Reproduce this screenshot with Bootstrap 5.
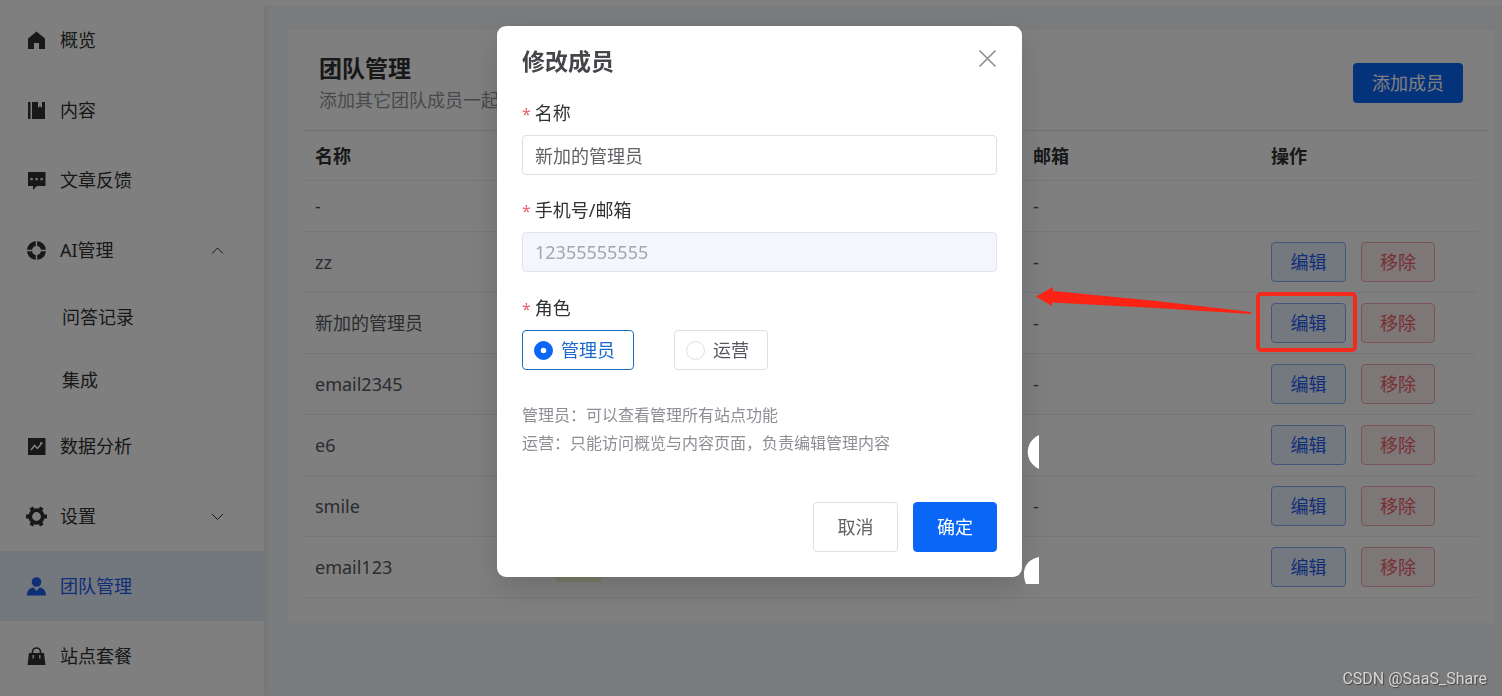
<!DOCTYPE html>
<html lang="zh-CN">
<head>
<meta charset="utf-8">
<meta name="viewport" content="width=device-width, initial-scale=1">
<title>团队管理</title>
<link href="https://cdn.jsdelivr.net/npm/bootstrap@5.3.0/dist/css/bootstrap.min.css" rel="stylesheet">
<style>
  :root { --brand: #0a66f7; --line: #ebeef5; --ink: #303133; }
  body {
    font-family: "Noto Sans", "Noto Sans CJK SC", sans-serif;
    font-size: 18px; line-height: 24px; color: var(--ink);
    background: #f5f7fa; overflow: hidden;
  }
  .side { width: 264px; padding-top: 5px; background: #fff; box-shadow: 2px 0 6px rgba(0,21,41,.06); }
  .side a { height: 70px; padding: 0 40px 0 26px; gap: 13px; color: var(--ink); text-decoration: none; }
  .side a.sub-item { height: 63px; padding-left: 62px; }
  .side a.active { background: #e6f0ff; color: #1f5cf0; }
  .side svg.glyph { width: 21px; height: 21px; flex: none; }
  .side svg.caret { width: 13px; height: 13px; margin-left: auto; }
  .topbar { height: 6px; background: #fff; }
  .panel { margin: 24px 8px 0 24px; background: #fff; padding-bottom: 25px; }
  .panel-head { margin: 0 6px 0 16px; padding: 24px 25px 16px 15px; border-bottom: 1px solid #e4e7ed; height: 101px; }
  h1, .modal-title { font-size: 23px; line-height: 28px; font-weight: 700; }
  .panel-head p { color: #909399; margin-top: 6px; }
  .add-btn { width: 110px; height: 40px; padding: 0; font-size: 18px; border-radius: 4px; color: #fff; background: var(--brand); border: 0; margin-top: 9px; }
  .team { width: calc(100% - 33px); margin: 0 17px 0 16px; table-layout: fixed; border-collapse: separate; border-spacing: 0; }
  .team th, .team td { padding: 0 11px; border-bottom: 1px solid var(--line); height: 61px; vertical-align: middle; }
  .team th { height: 50px; font-weight: 700; }
  .team td { color: #55585e; }
  .team tr.first td { height: 51px; }
  .team tr:nth-child(even) td { background: #fcfcfc; }
  .c-name { width: 240px; } .c-mail { width: 238px; } .c-ops { width: 217px; }
  .acts { gap: 15px; }
  .act { width: 75px; height: 40px; padding: 0; font-size: 18px; border: 1px solid; border-radius: 4px; }
  .act-edit, .act-edit:hover { color: #1f5cf0; background: #e8f1ff; border-color: #84acf8; }
  .act-del, .act-del:hover { width: 74px; color: #f0606a; background: #fdeeee; border-color: #f5a8ae; }
  .tag { width: 47px; height: 30px; border-radius: 4px; background: #f2f5cf; }
  /* annotation marks drawn above the backdrop */
  .mark-box { position: absolute; inset: -11px -11px -9px -15px; border: 4px solid #f32a1c; border-radius: 5px; z-index: 1060; }
  .mark-arrow { position: absolute; right: 95px; top: -17px; width: 215px; height: 30px; z-index: 1060; }
  .blob { position: absolute; left: 0; top: 12px; width: 17px; height: 44px; z-index: 1060; }
  .modal-backdrop { width: 100%; height: 100%; }
  .modal { padding-left: 17px; overflow: hidden; }
  .modal-dialog { max-width: 525px; margin: 26px auto; }
  .modal-content { border: 0; border-radius: 9px; padding: 20px 25px 25px; box-shadow: 0 12px 32px rgba(0,0,0,.15); color: #303133; }
  .modal-title { color: #444649; line-height: 30px; margin-bottom: 25px; }
  .close-x { border: 0; background: none; padding: 0; width: 19px; height: 24px; display: flex; align-items: center; }
  .field-label { display: block; margin: 0 0 9px; line-height: 24px; font-size: 18px; float: none; }
  .field-label::before { content: "*"; color: #e8606a; margin-right: 4px; font-size: 16px; }
  .modal .form-control { height: 40px; padding: 0 12px; font-size: 18px; border-color: #dcdfe6; border-radius: 4px; color: #606266; margin-bottom: 24px; }
  .modal #memberName { margin-bottom: 23px; }
  .modal .form-control:disabled { background: #f5f6fb; color: #a3a6ad; opacity: 1; border-color: #e1e4ea; }
  .roles { gap: 40px; }
  .role { height: 40px; padding: 0 18px 0 11px; gap: 8px; border: 1px solid #dcdfe6; border-radius: 4px; color: #55585e; }
  .role.on { border-color: #1f6fc0; color: #1a68d0; }
  .role .form-check-input { width: 19px; height: 19px; margin: 0; border-color: #dcdfe6; }
  .role .form-check-input:checked { background-color: var(--brand); border-color: var(--brand); background-size: 11px; }
  .hint { font-size: 16px; line-height: 28px; color: #8d8f94; margin: 31px 0 45px; }
  .foot-btn { width: 85px; height: 50px; padding: 0; font-size: 18px; border-radius: 4px; border: 1px solid #dcdfe6; color: #606266; background: #fff; }
  .foot-btn.ok { width: 84px; background: var(--brand); border-color: var(--brand); color: #fff; }
  .stamp { position: fixed; right: 15px; bottom: 7px; z-index: 1070; font: 16px/20px Roboto, sans-serif; color: #d6d6d6; text-shadow: 1px 1px 1px #444; }
</style>
</head>
<body>
<div class="d-flex min-vh-100">
  <nav class="side flex-shrink-0" aria-label="主导航">
    <a href="#" class="d-flex align-items-center"><svg class="glyph" viewBox="0 0 21 21" fill="currentColor"><path d="M10.500 1.500 19 8.500V19h-6v-6H8v6H2V8.500z"/></svg>概览</a>
    <a href="#" class="d-flex align-items-center"><svg class="glyph" viewBox="0 0 21 21" fill="currentColor"><path d="M2 2h2.500v17H2zM6 2h6v6l2-2 2 2V2h3v17H6z"/></svg>内容</a>
    <a href="#" class="d-flex align-items-center"><svg class="glyph" viewBox="0 0 21 21" fill="currentColor"><path fill-rule="evenodd" d="M2 2h17.500v14H11l-4 4v-4H2zM4.500 8v2.200h2.200V8zm5 0v2.200h2.200V8zm5 0v2.200h2.200V8z"/></svg>文章反馈</a>
    <a href="#" class="d-flex align-items-center"><svg class="glyph" viewBox="0 0 21 21"><circle cx="10.500" cy="10.500" r="7" fill="none" stroke="currentColor" stroke-width="5"/><path d="M10.500 0v6M10.500 15v6M0 10.500h6M15 10.500h6" stroke="#fff" stroke-width="1.400"/></svg>AI管理<svg class="caret" viewBox="0 0 13 13" fill="none" stroke="currentColor"><path d="M1 9.500 6.500 4 12 9.500"/></svg></a>
    <a href="#" class="sub-item d-flex align-items-center">问答记录</a>
    <a href="#" class="sub-item d-flex align-items-center">集成</a>
    <a href="#" class="d-flex align-items-center"><svg class="glyph" viewBox="0 0 21 21"><path d="M2 2h17.500v17H2z" fill="currentColor"/><path d="m5 14 3.500-4.500 3 3L16 7M14 7h2.500" fill="none" stroke="#fff" stroke-width="1.500"/></svg>数据分析</a>
    <a href="#" class="d-flex align-items-center"><svg class="glyph" viewBox="0 0 21 21"><circle cx="10.500" cy="10.500" r="6.300" fill="none" stroke="currentColor" stroke-width="3.800"/><g stroke="currentColor" stroke-width="4"><path d="M0 10.500h3.500M17.500 10.500H21M5.200 1.400 7 4.500M14 16.500l1.800 3.100M15.800 1.400 14 4.500M7 16.500l-1.800 3.100"/></g></svg>设置<svg class="caret" viewBox="0 0 13 13" fill="none" stroke="currentColor"><path d="M1 4 6.500 9.500 12 4"/></svg></a>
    <a href="#" class="active d-flex align-items-center" aria-current="page"><svg class="glyph" viewBox="0 0 21 21" fill="currentColor"><circle cx="10.500" cy="6" r="4.800"/><path d="M1 19.500c0-5 2.500-7.500 6.500-8l3 3.500 3-3.500c4 .5 6.500 3 6.500 8z"/></svg>团队管理</a>
    <a href="#" class="d-flex align-items-center"><svg class="glyph" viewBox="0 0 21 21"><path d="M3 7h15l1.500 12h-18z" fill="currentColor"/><path d="M6.500 8V6a4 4 0 0 1 8 0v2" fill="none" stroke="currentColor" stroke-width="1.600"/><path d="M7.200 9v3.500M13.800 9v3.500" stroke="#fff" stroke-width="1.300"/></svg>站点套餐</a>
  </nav>

  <main class="flex-grow-1">
    <div class="topbar"></div>
    <section class="panel">
      <header class="panel-head d-flex justify-content-between align-items-start">
        <div>
          <h1 class="mb-0">团队管理</h1>
          <p class="mb-0">添加其它团队成员一起运营</p>
        </div>
        <button type="button" class="btn add-btn">添加成员</button>
      </header>
      <table class="team">
        <colgroup><col class="c-name"><col><col class="c-mail"><col class="c-ops"></colgroup>
        <thead><tr><th>名称</th><th></th><th>邮箱</th><th>操作</th></tr></thead>
        <tbody>
          <tr class="first"><td>-</td><td></td><td>-</td><td></td></tr>
          <tr><td>zz</td><td></td><td>-</td><td><div class="acts d-flex"><button type="button" class="btn act act-edit">编辑</button><button type="button" class="btn act act-del">移除</button></div></td></tr>
          <tr><td>新加的管理员</td><td></td><td>-</td><td><div class="acts d-flex"><div class="position-relative"><button type="button" class="btn act act-edit">编辑</button><span class="mark-box"></span><svg class="mark-arrow" viewBox="0 0 215 30" fill="#fa2314"><path d="M0 10.500 17 1v4l103 10 95 11v2L120 22 16 16.500V20z"/></svg></div><button type="button" class="btn act act-del">移除</button></div></td></tr>
          <tr><td>email2345</td><td></td><td>-</td><td><div class="acts d-flex"><button type="button" class="btn act act-edit">编辑</button><button type="button" class="btn act act-del">移除</button></div></td></tr>
          <tr><td>e6</td><td></td><td class="position-relative"><svg class="blob" viewBox="0 0 17 44"><path d="M17 8v34C2 35 2 15 17 8z" fill="#fff"/></svg></td><td><div class="acts d-flex"><button type="button" class="btn act act-edit">编辑</button><button type="button" class="btn act act-del">移除</button></div></td></tr>
          <tr><td>smile</td><td></td><td>-</td><td><div class="acts d-flex"><button type="button" class="btn act act-edit">编辑</button><button type="button" class="btn act act-del">移除</button></div></td></tr>
          <tr><td>email123</td><td><div class="tag"></div></td><td class="position-relative"><svg class="blob" viewBox="0 0 17 44"><path d="M17 8v27H4C-1 22 3 11 17 8z" fill="#fff"/></svg></td><td><div class="acts d-flex"><button type="button" class="btn act act-edit">编辑</button><button type="button" class="btn act act-del">移除</button></div></td></tr>
        </tbody>
      </table>
    </section>
  </main>
</div>

<div class="modal-backdrop show"></div>
<div class="modal d-block" tabindex="-1" role="dialog" aria-modal="true" aria-labelledby="dlgTitle">
  <div class="modal-dialog">
    <form class="modal-content">
      <div class="d-flex justify-content-between align-items-start">
        <h2 class="modal-title" id="dlgTitle">修改成员</h2>
        <button type="button" class="close-x" aria-label="关闭"><svg width="19" height="19" viewBox="0 0 19 19" fill="none" stroke="#8a8c91" stroke-width="1.600"><path d="m1.500 1.500 16 16M17.500 1.500l-16 16"/></svg></button>
      </div>
      <label class="field-label" for="memberName">名称</label>
      <input class="form-control" id="memberName" type="text" value="新加的管理员">
      <label class="field-label" for="memberAccount">手机号/邮箱</label>
      <input class="form-control" id="memberAccount" type="text" value="12355555555" disabled>
      <fieldset>
        <legend class="field-label">角色</legend>
        <div class="roles d-flex">
          <label class="role on d-flex align-items-center" for="roleAdmin"><input class="form-check-input" type="radio" name="role" id="roleAdmin" checked>管理员</label>
          <label class="role d-flex align-items-center" for="roleOps"><input class="form-check-input" type="radio" name="role" id="roleOps">运营</label>
        </div>
      </fieldset>
      <p class="hint">管理员：可以查看管理所有站点功能<br>运营：只能访问概览与内容页面，负责编辑管理内容</p>
      <div class="acts d-flex justify-content-end">
        <button type="button" class="btn foot-btn">取消</button>
        <button type="submit" class="btn foot-btn ok">确定</button>
      </div>
    </form>
  </div>
</div>
<div class="stamp">CSDN @SaaS_Share</div>
<script src="https://cdn.jsdelivr.net/npm/bootstrap@5.3.0/dist/js/bootstrap.bundle.min.js"></script>
</body>
</html>
